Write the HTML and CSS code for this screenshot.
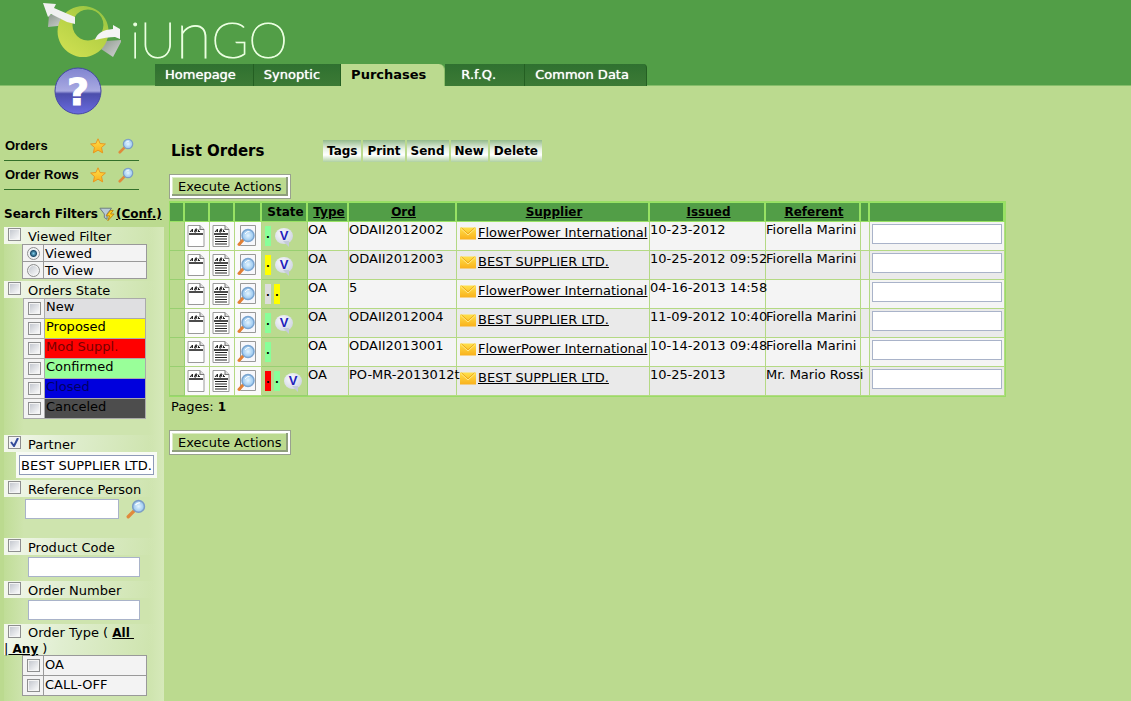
FILE: index.html
```html
<!DOCTYPE html>
<html lang="en">
<head>
<meta charset="utf-8">
<title>List Orders</title>
<link rel="stylesheet" href="styles.css">
</head>
<body>
<svg class="defs" aria-hidden="true">
  <defs>
    <linearGradient id="ring" x1="0.9" y1="0" x2="0.2" y2="1"><stop offset="0" stop-color="#8fc243"/><stop offset="0.4" stop-color="#b4d044"/><stop offset="1" stop-color="#cfe052"/></linearGradient>
    <linearGradient id="fold" x1="0" y1="0" x2="1" y2="1"><stop offset="0" stop-color="#8d9a8d"/><stop offset="1" stop-color="#d4d4d6"/></linearGradient>
    <linearGradient id="ball" x1="0" y1="0" x2="0" y2="1"><stop offset="0" stop-color="#8084d0"/><stop offset="0.5" stop-color="#a9aae2"/><stop offset="0.56" stop-color="#4c4eac"/><stop offset="1" stop-color="#6a6ce0"/></linearGradient>
    <linearGradient id="gold" x1="0" y1="0" x2="0" y2="1"><stop offset="0" stop-color="#ffe04a"/><stop offset="1" stop-color="#f9b01c"/></linearGradient>
    <radialGradient id="lens"><stop offset="0" stop-color="#e4f5ff"/><stop offset="1" stop-color="#94c4ee"/></radialGradient>
  </defs>
  <symbol id="star" viewBox="0 0 16 16"><path d="M8 .8l2.1 4.700 5.300.5-3.900 3.500 1.200 5.400L8 12.200l-4.700 2.700 1.200-5.400L.6 6l5.300-.5z" fill="url(#gold)" stroke="#e8921c" stroke-width=".9" stroke-linejoin="round"/></symbol>
  <symbol id="glass" viewBox="0 0 18 18"><path d="M7.500 10.500L2 16" stroke="#e08a3c" stroke-width="3" stroke-linecap="round"/><circle cx="11.300" cy="6.700" r="5.300" fill="url(#lens)" stroke="#7b9cc4" stroke-width="1.300"/><path d="M8.500 5.500q1.400-2.400 4-2" stroke="#fff" fill="none"/></symbol>
  <symbol id="page" viewBox="0 0 18 22"><path d="M1 .5h12l4 4v17H1z" fill="#fff" stroke="#999"/><path d="M13 .5v4h4" fill="#ddd" stroke="#777"/><path d="M3 7l2.500-3v3M4 6h2M7.500 7l1-3h1.500l-.5 1.500H8h1.500L9 7H7.500M12 4.500l-1 2h2" stroke="#222" fill="none"/><path d="M2 9h14" stroke="#111" stroke-width="1.500"/></symbol>
  <symbol id="pagefull" viewBox="0 0 18 22"><use href="#page"/><path d="M3 11.500h12M3 14h12M3 16.500h12M3 19h12" stroke="#222" stroke-width="1.200"/></symbol>
  <symbol id="view" viewBox="0 0 20 22"><path d="M3.500 .5h15v20h-15z" fill="#f7f7fb" stroke="#999"/><path d="M6 15L2 19.500" stroke="#e28035" stroke-width="3" stroke-linecap="round"/><circle cx="11" cy="10.500" r="6" fill="url(#lens)" stroke="#7ba5d0" stroke-width="1.500"/><path d="M8 9q1.500-3 4.500-2.500" stroke="#fff" fill="none"/></symbol>
  <symbol id="mail" viewBox="0 0 16 13"><path d="M0 .5h16v12H0z" fill="url(#gold)"/><path d="M1 1.500l7 6.500 7-6.500" stroke="#fff0a0" fill="none" stroke-width=".8"/><path d="M1.500 .8l6.500 6L14.500 .8" stroke="#e8a010" fill="none" stroke-width=".8"/></symbol>
</svg>

<header class="top">
  <svg class="mark" viewBox="0 0 82 60" role="img" aria-label="logo">
    <path d="M7 15l10-1 2 6 6 5-19 2z" fill="url(#fold)"/>
    <path d="M64 41l15-1 0 2-8 15-12-8z" fill="url(#fold)"/>
    <path fill-rule="evenodd" fill="url(#ring)" d="M41 6a25.500 25.500 0 1 0 .1 0zM46 9.500a15.500 15.500 0 1 1-.1 0z"/>
    <path d="M1 3l13 1-2 4 21 9v7l-8-2-16-8-3 3z" fill="#f1f1f1"/>
    <path d="M53 40q3-10 18-11l0-4 7 4v10l-5-2q-8 0-20 3z" fill="#f4f4f4"/>
  </svg>
  <div class="word">iU<span>n</span>GO</div>
  <nav class="tabs">
    <a href="#">Homepage</a><a href="#">Synoptic</a><a href="#" class="current">Purchases</a><a href="#" class="rfq">R.f.Q.</a><a href="#">Common Data</a>
  </nav>
  <a class="help" href="#" aria-label="Help"><svg viewBox="0 0 48 48"><circle cx="24" cy="24" r="23" fill="url(#ball)" stroke="#4547a5" stroke-width="1"/><text x="24" y="38" text-anchor="middle">?</text></svg></a>
</header>

<div class="layout">
  <aside class="side">
    <ul class="menu">
      <li><a href="#">Orders</a><svg class="i16"><use href="#star"/></svg><svg class="i16 last"><use href="#glass"/></svg></li>
      <li><a href="#">Order Rows</a><svg class="i16"><use href="#star"/></svg><svg class="i16 last"><use href="#glass"/></svg></li>
    </ul>
    <form class="filters">
      <h2>Search Filters<svg class="i16" viewBox="0 0 18 16"><path d="M1 1.500h13L9 8v6l-3-2V8z" fill="#b9cbd8" stroke="#66747c"/><path d="M13 4l-5 6h4l-2 5.500 7-7.500h-4l3-4z" fill="#ffd21c" stroke="#bf7e10"/></svg><a href="#">(Conf.)</a></h2>

      <div class="head"><input type="checkbox" id="f1"><label for="f1">Viewed Filter</label></div>
      <div class="opts radios">
        <label><span class="tick"><input type="radio" name="v" checked></span><span>Viewed</span></label>
        <label><span class="tick"><input type="radio" name="v"></span><span>To View</span></label>
      </div>

      <div class="head"><input type="checkbox" id="f2"><label for="f2">Orders State</label></div>
      <div class="opts states">
        <label><span class="tick"><input type="checkbox"></span><span class="s-new">New</span></label>
        <label><span class="tick"><input type="checkbox"></span><span class="s-prop">Proposed</span></label>
        <label><span class="tick"><input type="checkbox"></span><span class="s-mod">Mod Suppl.</span></label>
        <label><span class="tick"><input type="checkbox"></span><span class="s-conf">Confirmed</span></label>
        <label><span class="tick"><input type="checkbox"></span><span class="s-closed">Closed</span></label>
        <label><span class="tick"><input type="checkbox"></span><span class="s-canc">Canceled</span></label>
      </div>

      <div class="head gap"><input type="checkbox" id="f3" checked><label for="f3">Partner</label></div>
      <div class="partner"><input type="text" aria-label="Partner" value="BEST SUPPLIER LTD."></div>

      <div class="head"><input type="checkbox" id="f4"><label for="f4">Reference Person</label></div>
      <div class="field person"><input type="text" aria-label="Reference Person"><svg class="i20"><use href="#glass"/></svg></div>

      <div class="head"><input type="checkbox" id="f5"><label for="f5">Product Code</label></div>
      <div class="field"><input type="text" aria-label="Product Code"></div>

      <div class="head"><input type="checkbox" id="f6"><label for="f6">Order Number</label></div>
      <div class="field"><input type="text" aria-label="Order Number"></div>

      <div class="head type"><input type="checkbox" id="f7"><label for="f7">Order Type (</label> <a href="#">All&nbsp;</a><br>|<a href="#">&nbsp;Any</a> )</div>
      <div class="opts plain">
        <label><span class="tick"><input type="checkbox"></span><span>OA</span></label>
        <label><span class="tick"><input type="checkbox"></span><span>CALL-OFF</span></label>
      </div>
    </form>
  </aside>

  <main class="content">
    <div class="bar">
      <h1>List Orders</h1>
      <div class="tools"><button>Tags</button><button>Print</button><button>Send</button><button>New</button><button>Delete</button></div>
    </div>
    <button class="exec">Execute Actions</button>
    <table class="orders">
      <colgroup><col class="c1"><col class="c2"><col class="c2"><col class="c3"><col class="c4"><col class="c5"><col class="c6"><col class="c7"><col class="c8"><col class="c9"><col class="c10"><col class="c11"></colgroup>
      <thead><tr><th></th><th></th><th></th><th></th><th>State</th><th><a href="#">Type</a></th><th><a href="#">Ord</a></th><th><a href="#">Supplier</a></th><th><a href="#">Issued</a></th><th><a href="#">Referent</a></th><th></th><th></th></tr></thead>
      <tbody>
        <tr><td class="g"></td><td class="ic"><svg class="pg"><use href="#page"/></svg></td><td class="ic"><svg class="pg"><use href="#pagefull"/></svg></td><td class="ic"><svg class="vw"><use href="#view"/></svg></td><td class="g"><div class="marks"><i class="conf">.</i><b class="bubble">V</b></div></td><td>OA</td><td>ODAII2012002</td><td><div class="sup"><svg class="ml"><use href="#mail"/></svg><a href="#">FlowerPower International</a></div></td><td>10-23-2012</td><td>Fiorella Marini</td><td></td><td class="in"><input type="text" aria-label="Note 1"></td></tr>
        <tr><td class="g"></td><td class="ic"><svg class="pg"><use href="#page"/></svg></td><td class="ic"><svg class="pg"><use href="#pagefull"/></svg></td><td class="ic"><svg class="vw"><use href="#view"/></svg></td><td class="g"><div class="marks"><i class="prop">.</i><b class="bubble">V</b></div></td><td>OA</td><td>ODAII2012003</td><td><div class="sup"><svg class="ml"><use href="#mail"/></svg><a href="#">BEST SUPPLIER LTD.</a></div></td><td>10-25-2012 09:52</td><td>Fiorella Marini</td><td></td><td class="in"><input type="text" aria-label="Note 2"></td></tr>
        <tr><td class="g"></td><td class="ic"><svg class="pg"><use href="#page"/></svg></td><td class="ic"><svg class="pg"><use href="#pagefull"/></svg></td><td class="ic"><svg class="vw"><use href="#view"/></svg></td><td class="g"><div class="marks"><i class="new">.</i><i class="prop">.</i></div></td><td>OA</td><td>5</td><td><div class="sup"><svg class="ml"><use href="#mail"/></svg><a href="#">FlowerPower International</a></div></td><td>04-16-2013 14:58</td><td></td><td></td><td class="in"><input type="text" aria-label="Note 3"></td></tr>
        <tr><td class="g"></td><td class="ic"><svg class="pg"><use href="#page"/></svg></td><td class="ic"><svg class="pg"><use href="#pagefull"/></svg></td><td class="ic"><svg class="vw"><use href="#view"/></svg></td><td class="g"><div class="marks"><i class="conf">.</i><b class="bubble">V</b></div></td><td>OA</td><td>ODAII2012004</td><td><div class="sup"><svg class="ml"><use href="#mail"/></svg><a href="#">BEST SUPPLIER LTD.</a></div></td><td>11-09-2012 10:40</td><td>Fiorella Marini</td><td></td><td class="in"><input type="text" aria-label="Note 4"></td></tr>
        <tr><td class="g"></td><td class="ic"><svg class="pg"><use href="#page"/></svg></td><td class="ic"><svg class="pg"><use href="#pagefull"/></svg></td><td class="ic"><svg class="vw"><use href="#view"/></svg></td><td class="g"><div class="marks"><i class="conf">.</i></div></td><td>OA</td><td>ODAII2013001</td><td><div class="sup"><svg class="ml"><use href="#mail"/></svg><a href="#">FlowerPower International</a></div></td><td>10-14-2013 09:48</td><td>Fiorella Marini</td><td></td><td class="in"><input type="text" aria-label="Note 5"></td></tr>
        <tr><td class="g"></td><td class="ic"><svg class="pg"><use href="#page"/></svg></td><td class="ic"><svg class="pg"><use href="#pagefull"/></svg></td><td class="ic"><svg class="vw"><use href="#view"/></svg></td><td class="g"><div class="marks"><i class="mod">.</i><i class="conf">.</i><b class="bubble">V</b></div></td><td>OA</td><td>PO-MR-2013012t</td><td><div class="sup"><svg class="ml"><use href="#mail"/></svg><a href="#">BEST SUPPLIER LTD.</a></div></td><td>10-25-2013</td><td>Mr. Mario Rossi</td><td></td><td class="in"><input type="text" aria-label="Note 6"></td></tr>
      </tbody>
    </table>
    <p class="pages">Pages: <b>1</b></p>
    <button class="exec">Execute Actions</button>
  </main>
</div>
</body>
</html>
```
FILE: styles.css
```css
* { box-sizing: border-box; }
body {
  margin: 0;
  min-height: 100vh;
  display: flex;
  flex-direction: column;
  background: #bbda8f;
  color: #000;
  font: 13px/16px Verdana, "DejaVu Sans", sans-serif;
}
a { color: inherit; }
svg { display: block; flex: none; }
.defs { position: absolute; width: 0; height: 0; }
.i16 { width: 16px; height: 16px; }
.i20 { width: 20px; height: 20px; }

.top {
  position: relative;
  display: flex;
  height: 86px;
  padding-left: 42px;
  background: #529e47;
  border-bottom: 1px solid #85bd69;
}
.mark { width: 82px; height: 60px; }
.word {
  height: 64px;
  margin-left: 6px;
  color: #eaffe0;
  font: 100 50px/78px Lato, sans-serif;
  white-space: nowrap;
  -webkit-text-stroke: 1px #eaffe0;
}
.word span { font-size: 66px; line-height: 1px; }
.tabs { position: absolute; left: 155px; top: 64px; display: flex; }
.tabs a {
  height: 22px;
  padding: 0 17px 0 10px;
  border-right: 1px solid #245f22;
  background: linear-gradient(#2f7130, #3c7a35);
  color: #fff;
  line-height: 21px;
  text-decoration: none;
  text-shadow: 0 0 1px #fff;
}
.tabs a:nth-child(2) { padding-right: 20px; }
.tabs a:last-child { border-radius: 0 4px 0 0; }
.tabs .rfq { padding: 0 28px 0 16px; }
.tabs .current {
  padding-right: 18px;
  border-right-color: #8fc06c;
  border-radius: 0 6px 0 0;
  background: #bbda8f;
  color: #000;
  font-weight: bold;
  text-shadow: none;
}
.help { position: absolute; left: 54px; top: 67px; width: 48px; height: 48px; }
.help text { font: bold 38px "DejaVu Sans", sans-serif; fill: #fff; stroke: #fff; stroke-width: 1px; }

.layout { flex: 1; display: flex; }
.side { flex: none; width: 164px; padding: 46px 0 0 4px; display: flex; flex-direction: column; }
.menu { list-style: none; margin: 0 25px 0 0; padding: 0; font: bold 13px/16px "Liberation Sans", Arial, sans-serif; }
.menu li { display: flex; align-items: center; height: 29px; padding-left: 1px; border-bottom: 1px solid #33702a; }
.menu a { flex: 1; text-decoration: none; }
.menu .last { margin: 0 5px 0 12px; }

.filters {
  flex: 1;
  margin-top: 14px;
  background: linear-gradient(90deg, #c0dd97, #cee4ae 20px, #cee4ae 145px, #d6e9ba);
}
.filters h2 { display: flex; align-items: center; gap: 1px; margin: 0; height: 23px; padding-bottom: 3px; background: #bbda8f; font-size: 12px; line-height: 16px; white-space: nowrap; }
.head { height: 17px; background: linear-gradient(100deg, #f4f8ee, #e0eed0 60px, transparent 150px); white-space: nowrap; }
.head label { padding-left: 7px; line-height: 20px; }
.head input { vertical-align: top; }
.gap { margin-top: 16px; }
.type { height: 31px; padding-top: 1px; line-height: 15px; }
.type a { font-size: 12px; font-weight: bold; }
.type label { line-height: 15px; }

input[type=checkbox], input[type=radio] {
  appearance: none;
  width: 13px;
  height: 13px;
  margin: 1px 0 0;
  border: 1px solid #8e8f8f;
  background: linear-gradient(135deg, #bfc3cb, #fff);
  box-shadow: inset 0 0 0 1px #f4f4f4;
}
.head input[type=checkbox] { margin-left: 4px; }
.type input[type=checkbox] { margin-top: 0; }
input[type=radio] { border-radius: 50%; }
input[type=radio]:checked { background: radial-gradient(#7fd0ee, #1c4d6c 3px, #e8eef2 4px); }
input[type=checkbox]:checked { background: url("data:image/svg+xml,%3Csvg xmlns='http://www.w3.org/2000/svg' viewBox='0 0 11 11'%3E%3Cpath d='M2 5l3 4 4-8' fill='none' stroke='%23334a9a' stroke-width='2'/%3E%3C/svg%3E") #eef0f4; }
input[type=text] {
  height: 20px;
  padding: 0 1px;
  border: 1px solid #a9b3c9;
  background: #fff;
  font: inherit;
}
.opts { margin: 0 17px 2px 18px; border: 1px solid #999; background: #999; display: grid; gap: 1px; }
.opts label { display: flex; gap: 1px; height: 19px; line-height: 17px; }
.opts .tick { flex: none; width: 20px; padding: 2px 0 0 4px; background: #f3f3f3; }
.opts span { flex: 1; padding-left: 1px; background: #f3f3f3; }
.radios label { height: 16px; }
.radios .tick { padding-top: 1px; }
.states { margin: 0 18px 0 19px; border-color: #aaa; background: #aaa; }
.states label { line-height: 15px; }
.opts .s-new { background: #dfdfe1; }
.opts .s-prop { background: #ff0; }
.opts .s-mod { background: #f00; color: #700; }
.opts .s-conf { background: #9f9; }
.opts .s-closed { background: #00d; color: #000064; }
.opts .s-canc { background: #4d4d4d; }
.partner { width: 141px; margin: 0 0 2px 12px; padding: 3px; background: #f8fbf4; }
.partner input { width: 100%; border-color: #8f9bb8; }
.field { display: flex; height: 26px; margin-left: 24px; padding-top: 2px; }
.field input { width: 112px; }
.person { height: 41px; margin-left: 21px; gap: 7px; }
.person input { width: 94px; }

.content { flex: 1; padding: 54px 0 0 6px; }
.bar { display: flex; }
h1 { width: 153px; margin: 0; font-size: 15px; line-height: 22px; padding-left: 1px; }
.tools { display: flex; gap: 2px; }
.tools button {
  height: 22px;
  padding: 0 4px;
  border: 0;
  background: linear-gradient(#94bb8c, #e9f2e4 9px, #fff 15px, #aed0a0);
  font: bold 12px/16px Verdana, "DejaVu Sans", sans-serif;
}
.exec {
  display: block;
  height: 25px;
  padding: 0 8px;
  margin: 12px 0 2px -1px;
  border: 1px solid #99a18f;
  background: #bbda8f;
  box-shadow: inset 0 0 0 2px #fff, inset -4px -4px 0 #8f9f7c, inset 3px 3px 0 #dcebc6;
  font: inherit;
}

.orders { width: 837px; table-layout: fixed; border-spacing: 0; border: 1px solid #99dd66; margin-left: -1px; }
.c1 { width: 15px; } .c2 { width: 25px; } .c3 { width: 27px; } .c4 { width: 46px; }
.c5 { width: 41px; } .c6 { width: 108px; } .c7 { width: 193px; } .c8 { width: 116px; }
.c9 { width: 95px; } .c10 { width: 9px; }
.orders th { height: 20px; padding: 0; background: #529e47; border-right: 2px solid #98e264; border-top: 1px solid #98e264; border-bottom: 1px solid #98e264; font-size: 12px; }
.orders th:nth-child(n+5) { padding-left: 3px; }
.orders td { height: 29px; padding: 0; border-right: 1px solid #b4d984; border-bottom: 1px solid #b4d984; background: #f4f4f4; vertical-align: top; white-space: nowrap; }
.orders tr:nth-child(even) td, .orders tr:last-child td { background: #eaeaea; }
.orders tbody tr .g { background: #bbda8f; border-color: #98cf70; }
.orders tbody tr .ic { background: #fafafa; }
.ic svg { margin: 3px auto 0 2px; }
.pg { width: 18px; height: 22px; }
.vw { width: 20px; height: 22px; }
.marks { display: flex; gap: 3px; padding: 4px 0 0 3px; }
.marks i { width: 6px; height: 20px; font: bold 10px/17px "DejaVu Sans", sans-serif; text-align: center; }
.conf { background: #8f9; }
.prop { background: #ff0; }
.new { background: #ddd; }
.mod { background: #f00; }
.bubble {
  position: relative;
  width: 18px;
  height: 16px;
  margin: 2px 0 0 1px;
  border-radius: 50%;
  background: radial-gradient(circle at 40% 35%, #fafaff, #c4cbda);
  color: #22b;
  font: bold 13px/16px "Liberation Sans", Arial, sans-serif;
  text-align: center;
}
.bubble::after { content: ""; position: absolute; right: 4px; bottom: -3px; border: 3px solid transparent; border-top-color: #c4cbda; border-right-color: #c4cbda; }
.sup { display: flex; align-items: center; gap: 2px; padding: 3px 0 0 3px; }
.ml { width: 16px; height: 13px; }
.orders .in { padding: 2px 0 0 2px; }
.in input { width: 130px; }
.pages { margin: 2px 0 0 1px; }
.pages + .exec { margin-top: 15px; }
.pages b { font-size: 12px; }
```
